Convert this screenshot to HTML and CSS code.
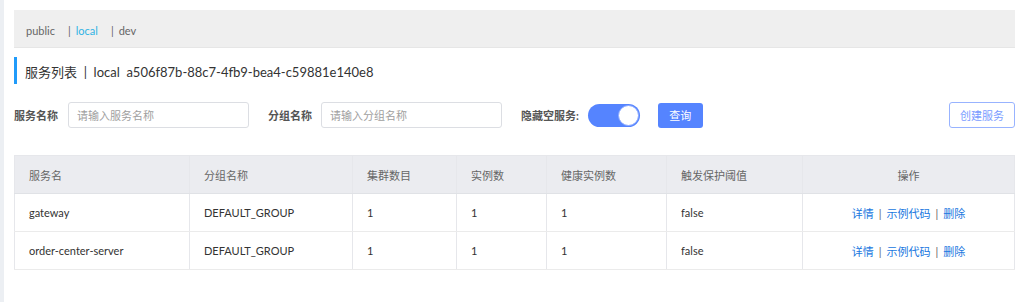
FILE: index.html
```html
<!DOCTYPE html>
<html lang="zh-CN">
<head>
<meta charset="utf-8">
<title>服务列表</title>
<link rel="stylesheet" href="styles.css">
</head>
<body>
<div class="app">
  <aside class="side"></aside>
  <main class="main">
    <div class="ns-bar">
      <span class="ns">public</span>
      <span class="ns"><span class="sep">|</span><span class="active">local</span></span>
      <span class="ns"><span class="sep">|</span>dev</span>
    </div>
    <div class="title">服务列表 &nbsp;|&nbsp; local &nbsp;a506f87b-88c7-4fb9-bea4-c59881e140e8</div>
    <div class="filters">
      <label class="flabel">服务名称</label>
      <input class="finput" type="text" placeholder="请输入服务名称">
      <label class="flabel second">分组名称</label>
      <input class="finput" type="text" placeholder="请输入分组名称">
      <label class="flabel third">隐藏空服务:</label>
      <span class="toggle"><span class="knob"></span></span>
      <button class="btn-primary">查询</button>
      <button class="btn-outline">创建服务</button>
    </div>
    <table class="grid">
      <colgroup>
        <col style="width:175px"><col style="width:163px"><col style="width:104px"><col style="width:90px"><col style="width:120px"><col style="width:136px"><col>
      </colgroup>
      <thead>
        <tr><th>服务名</th><th>分组名称</th><th>集群数目</th><th>实例数</th><th>健康实例数</th><th>触发保护阈值</th><th class="center">操作</th></tr>
      </thead>
      <tbody>
        <tr><td>gateway</td><td>DEFAULT_GROUP</td><td>1</td><td>1</td><td>1</td><td>false</td><td class="center ops"><a>详情</a><span class="bar">|</span><a>示例代码</a><span class="bar">|</span><a>删除</a></td></tr>
        <tr><td>order-center-server</td><td>DEFAULT_GROUP</td><td>1</td><td>1</td><td>1</td><td>false</td><td class="center ops"><a>详情</a><span class="bar">|</span><a>示例代码</a><span class="bar">|</span><a>删除</a></td></tr>
      </tbody>
    </table>
  </main>
</div>
</body>
</html>
```
FILE: styles.css
```css
* { box-sizing: border-box; }
html, body { margin: 0; padding: 0; background: #fff; }
body {
  font-family: Lato, "Noto Sans CJK SC", sans-serif;
  font-size: 11px;
  color: #333;
}
.app { display: flex; min-height: 302px; }
.side { width: 4px; background: #eceff3; flex: none; }
.main { flex: 1; padding: 10px 9px 0 10px; }

.ns-bar {
  height: 38px;
  background: #efefef;
  border-bottom: 1px solid #e6e6e6;
  display: flex;
  align-items: center;
  padding: 3px 0 0 12px;
  color: #666;
  font-size: 11px;
}
.ns { margin-right: 13px; }
.ns .sep { margin-right: 5px; color: #666; }
.ns .active { color: #2fb3e4; }

.title {
  margin-top: 9px;
  height: 27px;
  line-height: 21px;
  padding-top: 5px;
  border-left: 3px solid #209bfa;
  padding-left: 8px;
  font-size: 13px;
  color: #333;
}

.filters {
  margin-top: 18px;
  display: flex;
  align-items: center;
  height: 26px;
}
.flabel { font-weight: bold; color: #555; font-size: 11px; margin-right: 10px; }
.flabel.second { margin-left: 19px; margin-right: 9px; }
.flabel.third { margin-left: 19px; margin-right: 9px; }
.finput {
  width: 181px;
  height: 26px;
  border: 1px solid #dcdee3;
  border-radius: 3px;
  padding: 0 8px;
  font-family: inherit;
  font-size: 11px;
  color: #333;
  outline: none;
}
.finput::placeholder { color: #a0a0a0; }
.toggle {
  width: 52px;
  height: 23px;
  border-radius: 12px;
  background: #5584ff;
  display: flex;
  justify-content: flex-end;
  align-items: center;
  padding: 1px;
}
.knob {
  width: 21px;
  height: 21px;
  border-radius: 50%;
  background: #fff;
  border: 1px solid #8aa9ff;
}
.btn-primary {
  margin-left: 18px;
  width: 45px;
  height: 25px;
  border: none;
  border-radius: 3px;
  background: #5584ff;
  color: #fff;
  font-family: inherit;
  font-size: 11px;
  padding: 0;
}
.btn-outline {
  margin-left: auto;
  width: 66px;
  height: 26px;
  border: 1px solid #98b3ff;
  border-radius: 3px;
  background: #fff;
  color: #7a9cff;
  font-family: inherit;
  font-size: 11px;
  padding: 0;
}

.grid {
  margin-top: 27px;
  width: 100%;
  border-collapse: collapse;
  table-layout: fixed;
  border: 1px solid #e6e7eb;
}
.grid th, .grid td {
  text-align: left;
  padding: 0 0 0 14px;
  border-left: 1px solid #e6e7eb;
  font-weight: normal;
  font-size: 11px;
}
.grid th {
  height: 38px;
  background: #ebecf0;
  color: #666;
  border-bottom: 1px solid #e0e2e6;
}
.grid td {
  height: 38px;
  color: #333;
  border-bottom: 1px solid #ebebeb;
}
.grid .center { text-align: center; padding-left: 0; }
.ops a { color: #2077e0; }
.ops .bar { color: #666; margin: 0 5px; }
```
